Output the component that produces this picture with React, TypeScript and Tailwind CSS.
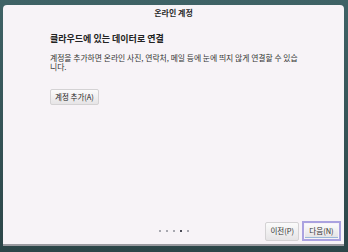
const font = { fontFamily: '"Noto Sans CJK KR", "Noto Sans", sans-serif' };

function Dots() {
  return (
    <div className="flex items-center gap-[5px]">
      <span className="w-[2px] h-[2px] bg-[#a8a8b0]" />
      <span className="w-[2px] h-[2px] bg-[#a8a8b0]" />
      <span className="w-[2px] h-[2px] bg-[#a8a8b0]" />
      <span className="w-[2px] h-[2px] bg-[#4a4a55]" />
      <span className="w-[2px] h-[2px] bg-[#a8a8b0]" />
    </div>
  );
}

export default function App() {
  return (
    <div
      className="w-[348px] h-[252px] bg-gradient-to-b from-[#3f6266] to-[#2c4548] pt-[5px] px-[3px] overflow-hidden"
      style={font}
    >
      <div className="w-[341px] h-[241px] bg-[#f7f3f7] rounded-t-[4px] border-b-2 border-[#9a9aa0] flex flex-col">
        <div className="h-[14px] flex items-center justify-center text-[8px] font-bold text-[#2a2a2a] pt-[1px]">
          온라인 계정
        </div>
        <div className="pl-[47px] pr-[20px] pt-[14px]">
          <div className="text-[9px] font-bold text-[#222] leading-[12px]">
            클라우드에 있는 데이터로 연결
          </div>
          <div className="mt-[8px] text-[7.8px] text-[#333] leading-[9px] w-[252px]">
            계정을 추가하면 온라인 사진, 연락처, 메일 등에 눈에 띄지 않게 연결할 수 있습니다.
          </div>
          <button className="mt-[18px] h-[16px] px-[4px] text-[7.5px] text-[#222] bg-gradient-to-b from-[#fbfbfb] to-[#e6e4e6] border border-[#d4d2d4] rounded-[2px] leading-none">
            계정 추가(A)
          </button>
        </div>
        <div className="flex-1" />
        <div className="flex items-center pb-[3px] pr-[3px]">
          <div className="flex-1 flex justify-center pl-[80px]">
            <Dots />
          </div>
          <button className="h-[19px] px-[4px] text-[7.5px] text-[#333] bg-gradient-to-b from-[#fbfbfb] to-[#e6e4e6] border border-[#d4d2d4] rounded-[2px] leading-none">
            이전(P)
          </button>
          <div className="ml-[3px] h-[20px] w-[39px] border-2 border-[#aaa2e0] p-[1px] flex">
            <button className="flex-1 h-[14px] text-[7.5px] text-[#333] bg-gradient-to-b from-[#fbfbfb] to-[#e6e4e6] border-b border-[#9ab8d8] leading-none">
              다음(N)
            </button>
          </div>
        </div>
      </div>
    </div>
  );
}
